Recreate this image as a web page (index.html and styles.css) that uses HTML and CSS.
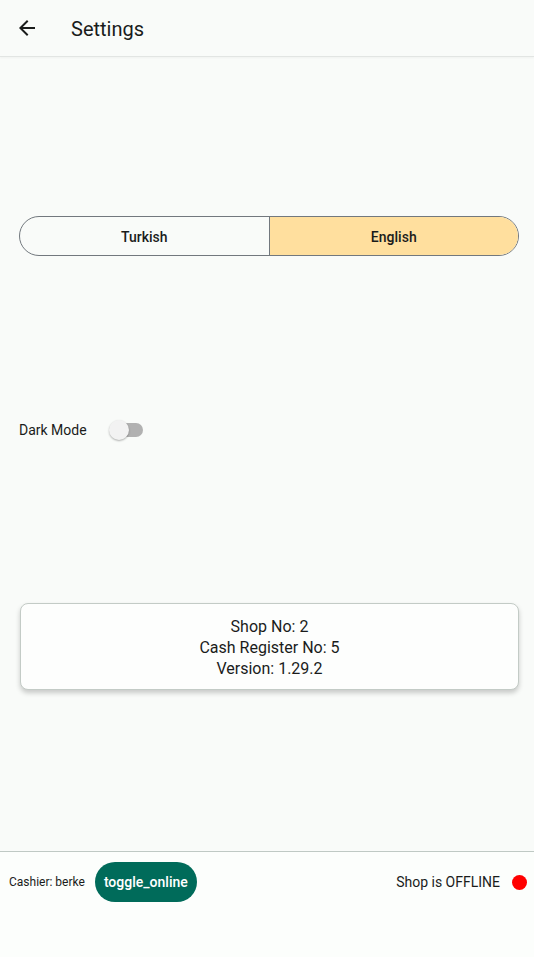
FILE: index.html
```html
<!DOCTYPE html>
<html>
<head>
<meta charset="utf-8">
<link rel="stylesheet" href="styles.css">
</head>
<body>
<div class="app">
  <header class="appbar">
    <svg class="back" width="24" height="24" viewBox="0 0 24 24"><path d="M20 11H7.83l5.59-5.59L12 4l-8 8 8 8 1.41-1.41L7.83 13H20v-2z" fill="#1a1c1b"/></svg>
    <h1 class="title">Settings</h1>
  </header>
  <main class="content">
    <div class="segmented">
      <div class="seg">Turkish</div>
      <div class="seg seg-active">English</div>
    </div>
    <div class="dark-row">
      <span class="dark-label">Dark Mode</span>
      <span class="switch"><span class="track"></span><span class="thumb"></span></span>
    </div>
    <div class="card">
      <div>Shop No: 2</div>
      <div>Cash Register No: 5</div>
      <div>Version: 1.29.2</div>
    </div>
  </main>
  <footer class="footer">
    <div class="footer-row">
      <div class="left">
        <span class="cashier">Cashier: berke</span>
        <button class="toggle">toggle_online</button>
      </div>
      <div class="right">
        <span class="status">Shop is OFFLINE</span>
        <span class="dot"></span>
      </div>
    </div>
  </footer>
</div>
</body>
</html>
```

FILE: styles.css
```css
* { box-sizing: border-box; }
html, body { margin: 0; padding: 0; }
body {
  font-family: Roboto, "Noto Sans", sans-serif;
  color: #1a1c1b;
  background: #f9fbf9;
}
.app {
  display: flex;
  flex-direction: column;
  height: 957px;
}
.appbar {
  height: 57px;
  display: flex;
  align-items: center;
  padding-left: 15px;
  border-bottom: 1px solid #e2e5e3;
  box-shadow: 0 1px 2px rgba(0,0,0,0.04);
  background: #f9fbf9;
}
.back { display: block; margin-top: 0; }
.title {
  margin: 1px 0 0 32px;
  font-size: 20px;
  font-weight: 400;
  color: #1a1c1b;
}
.content {
  flex: 1;
  display: flex;
  flex-direction: column;
  padding: 0 15px 0 19px;
}
.segmented {
  margin-top: 159px;
  height: 40px;
  display: flex;
  border: 1px solid #72787e;
  border-radius: 20px;
  overflow: hidden;
}
.seg {
  flex: 1;
  display: flex;
  align-items: center;
  justify-content: center;
  padding-top: 1px;
  font-family: "Roboto Medium", Roboto, "Noto Sans", sans-serif;
  font-size: 14px;
  font-weight: 500;
  color: #1a1c1b;
}
.seg-active {
  background: #ffdf9e;
  border-left: 1px solid #72787e;
}
.dark-row {
  margin-top: 162px;
  height: 24px;
  display: flex;
  align-items: center;
}
.dark-label {
  font-size: 14px;
  color: #1a1c1b;
}
.switch {
  position: relative;
  width: 36px;
  height: 24px;
  margin-left: 22px;
}
.track {
  position: absolute;
  left: 4px;
  top: 5px;
  width: 30px;
  height: 14px;
  border-radius: 7px;
  background: #b1b1b1;
}
.thumb {
  position: absolute;
  left: 0;
  top: 2px;
  width: 20px;
  height: 20px;
  border-radius: 50%;
  background: #f2f2f2;
  box-shadow: 0 1px 2px rgba(0,0,0,0.3);
}
.card {
  margin-top: 161px;
  margin-left: 1px;
  height: 87px;
  padding-top: 2px;
  border: 1px solid #c3cbc6;
  border-radius: 8px;
  background: #fdfefd;
  box-shadow: 0 3px 5px rgba(0,0,0,0.2);
  display: flex;
  flex-direction: column;
  align-items: center;
  justify-content: center;
  font-size: 16px;
  line-height: 21px;
  color: #1a1c1b;
}
.footer {
  height: 106px;
  border-top: 1px solid #bfc9c4;
  background: #fcfefc;
}
.footer-row {
  display: flex;
  align-items: center;
  justify-content: space-between;
  height: 40px;
  margin-top: 10px;
  padding: 0 7px 0 9px;
}
.left, .right {
  display: flex;
  align-items: center;
}
.cashier {
  font-size: 12px;
  color: #1a1c1b;
}
.toggle {
  margin-left: 10px;
  height: 40px;
  padding: 0 9px;
  border: none;
  border-radius: 20px;
  background: #006b5a;
  color: #fff;
  font-family: "Roboto Medium", Roboto, "Noto Sans", sans-serif;
  font-size: 14px;
  font-weight: 500;
}
.status {
  font-size: 14px;
  color: #1a1c1b;
}
.dot {
  width: 15px;
  height: 15px;
  border-radius: 50%;
  background: #ff0000;
  margin-left: 12px;
}
```
